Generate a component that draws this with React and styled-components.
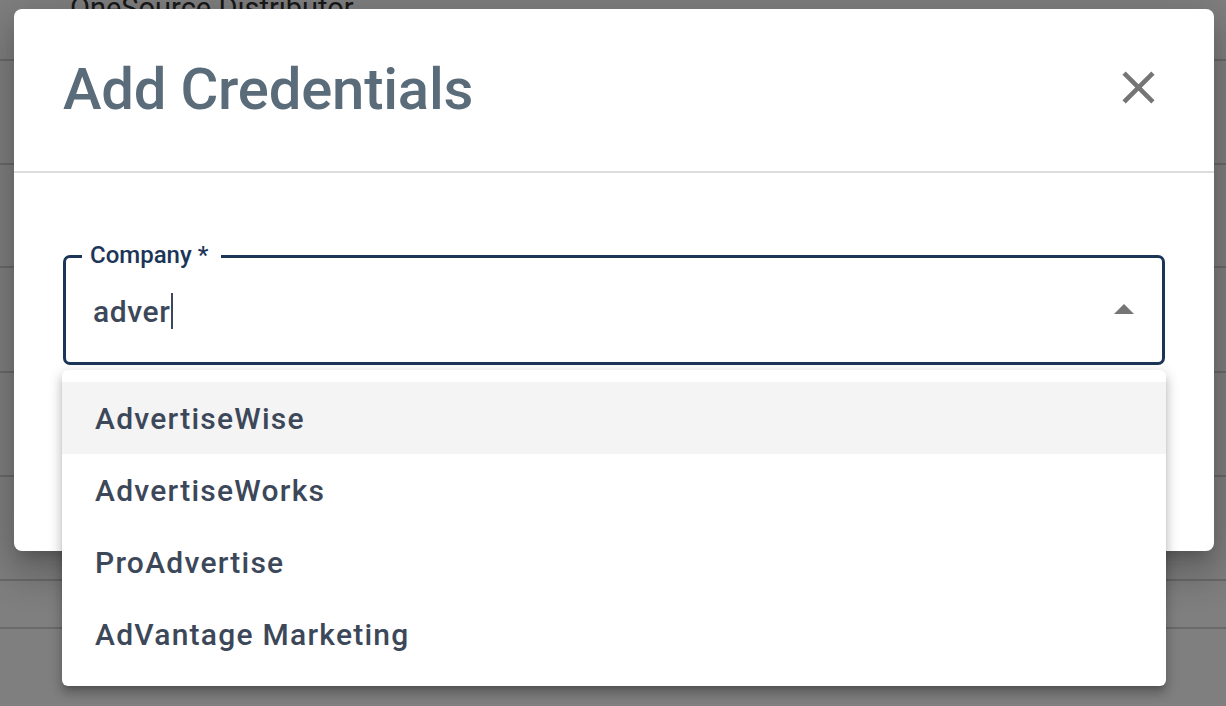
import React from "react";
import styled, { createGlobalStyle } from "styled-components";

const GlobalStyle = createGlobalStyle`
  html, body { margin: 0; padding: 0; }
  body {
    font-family: Roboto, "Noto Sans", Arial, sans-serif;
    background: #ffffff;
    width: 1226px;
    height: 706px;
    overflow: hidden;
  }
  * { box-sizing: border-box; }
`;

const Page = styled.div`
  position: relative;
  width: 1226px;
  height: 706px;
  overflow: hidden;
  background: #ffffff;
`;

const BgList = styled.div`
  display: flex;
  flex-direction: column;
  margin-top: -34px;
`;

const BgRow = styled.div`
  height: ${(p) => p.$h}px;
  border-bottom: 2px solid #d4d4d4;
  font-size: 29px;
  line-height: 34px;
  color: #333;
  padding-top: 25px;
  padding-left: 70px;
`;

const Overlay = styled.div`
  position: absolute;
  inset: 0;
  background: rgba(0, 0, 0, 0.5);
`;

const Modal = styled.div`
  position: absolute;
  left: 14px;
  top: 9px;
  width: 1200px;
  height: 542px;
  background: #fff;
  border-radius: 8px;
  box-shadow: 0px 11px 15px -7px rgba(0, 0, 0, 0.2),
    0px 24px 38px 3px rgba(0, 0, 0, 0.14), 0px 9px 46px 8px rgba(0, 0, 0, 0.12);
  display: flex;
  flex-direction: column;
`;

const Header = styled.div`
  height: 164px;
  border-bottom: 2px solid #dddddd;
  display: flex;
  align-items: center;
  justify-content: space-between;
  padding: 0 48px 2px 49px;
`;

const Title = styled.h2`
  margin: 0;
  font-size: 58px;
  font-weight: 500;
  color: #5a6b79;
  letter-spacing: -0.2px;
`;

const CloseButton = styled.button`
  border: none;
  background: none;
  padding: 0;
  width: 56px;
  height: 56px;
  display: flex;
  align-items: center;
  justify-content: center;
  cursor: pointer;
  margin-bottom: 4px;
`;

const Body = styled.div`
  padding: 82px 49px 0 49px;
`;

const Field = styled.div`
  position: relative;
  height: 110px;
  border: 3px solid #1b3558;
  border-radius: 7px;
  display: flex;
  align-items: center;
  padding: 0 14px 0 27px;
`;

const FieldLabel = styled.label`
  position: absolute;
  top: -17px;
  left: 16px;
  padding: 0 13px 0 8px;
  background: #fff;
  font-size: 24px;
  font-weight: 500;
  color: #1b3558;
  line-height: 28px;
`;

const InputText = styled.div`
  flex: 1;
  font-size: 30px;
  color: #3c4859;
  font-weight: 500;
  letter-spacing: 0.6px;
  display: flex;
  align-items: center;
  padding-top: 2px;
`;

const Caret = styled.span`
  display: inline-block;
  width: 2px;
  height: 36px;
  background: #3c4859;
  margin-left: 1px;
`;

const Dropdown = styled.ul`
  position: absolute;
  left: 62px;
  top: 370px;
  width: 1104px;
  margin: 0;
  padding: 12px 0 16px;
  list-style: none;
  background: #fff;
  border-radius: 6px;
  box-shadow: 0px 5px 5px -3px rgba(0, 0, 0, 0.2),
    0px 8px 10px 1px rgba(0, 0, 0, 0.14), 0px 3px 14px 2px rgba(0, 0, 0, 0.12);
`;

const Option = styled.li`
  height: 72px;
  display: flex;
  align-items: center;
  padding-left: 33px;
  font-size: 30px;
  font-weight: 500;
  letter-spacing: 1.25px;
  color: #3c4859;
  background: ${(p) => (p.$active ? "#f4f4f4" : "transparent")};
`;

const options = ["AdvertiseWise", "AdvertiseWorks", "ProAdvertise", "AdVantage Marketing"];
const rows = [95, 104, 103, 105, 104, 104, 48, 80];

export default function App() {
  return (
    <Page>
      <GlobalStyle />
      <BgList>
        {rows.map((h, i) => (
          <BgRow key={i} $h={h}>
            {i === 0 ? "OneSource Distributor" : ""}
          </BgRow>
        ))}
      </BgList>
      <Overlay />
      <Modal>
        <Header>
          <Title>Add Credentials</Title>
          <CloseButton aria-label="close">
            <svg width="55" height="55" viewBox="0 0 24 24" fill="#757575">
              <path d="M19 6.41 17.59 5 12 10.59 6.41 5 5 6.41 10.59 12 5 17.59 6.41 19 12 13.41 17.59 19 19 17.59 13.41 12z" />
            </svg>
          </CloseButton>
        </Header>
        <Body>
          <Field>
            <FieldLabel>Company *</FieldLabel>
            <InputText>
              adver
              <Caret />
            </InputText>
            <svg width="48" height="48" viewBox="0 0 24 24" fill="#757575">
              <path d="M7 14l5-5 5 5z" />
            </svg>
          </Field>
        </Body>
      </Modal>
      <Dropdown>
        {options.map((o, i) => (
          <Option key={o} $active={i === 0}>
            {o}
          </Option>
        ))}
      </Dropdown>
    </Page>
  );
}
